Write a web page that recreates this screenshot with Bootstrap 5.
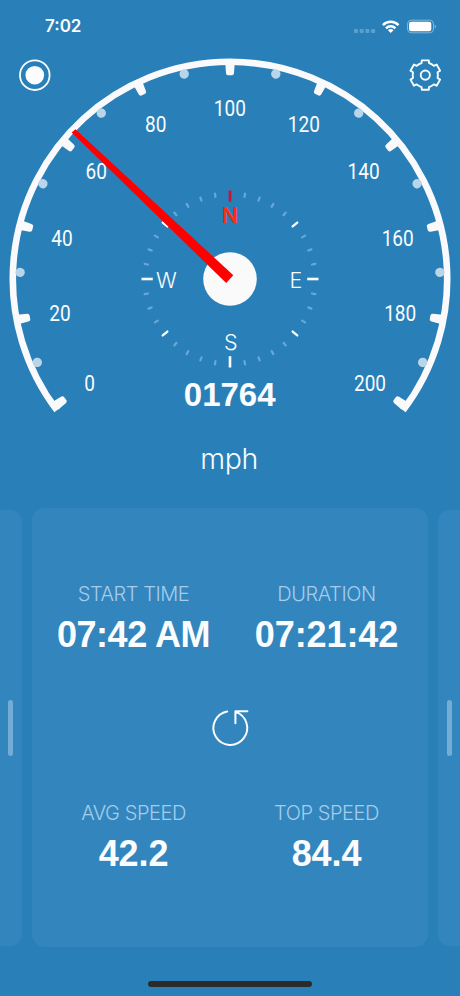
<!DOCTYPE html>
<html lang="en">
<head>
<meta charset="utf-8">
<meta name="viewport" content="width=device-width, initial-scale=1">
<title>Speedometer</title>
<link href="https://cdn.jsdelivr.net/npm/bootstrap@5.3.0/dist/css/bootstrap.min.css" rel="stylesheet">
<style>
  body { background: #2980b9; color: #fafcfe; font-family: Inter, "Liberation Sans", sans-serif; }
  .screen { width: 460px; height: 996px; }
  .status { height: 50px; padding: 1px 24px 0 45px; }
  .clock { font-size: 17px; font-weight: 600; line-height: 50px; }
  .tools { padding: 7px 17px; }
  .tool { width: 36px; height: 36px; }
  .gauge { height: 440px; }
  .scale-label { font: 400 22.5px Roboto, sans-serif; fill: #fafcfe; text-anchor: middle; }
  .compass { font: 350 21.5px Inter, sans-serif; fill: #fafcfe; text-anchor: middle; }
  .compass-north { font-weight: 600; fill: #f9300f; }
  .odometer { font: 700 33px "Liberation Sans", sans-serif; fill: #fafcfe; text-anchor: middle; }
  .unit { font: 350 28.5px Inter, sans-serif; letter-spacing: -.3px; fill: #fafcfe; text-anchor: middle; }
  .pages { height: 439px; margin-top: 18px; gap: 10px; }
  .panel { background: #3386bd; }
  .panel-main { width: 396px; border-radius: 13px; padding: 72px 5px 0; }
  .panel-side { width: 22px; margin: 2px 0 1px; }
  .panel-prev { border-radius: 0 12px 12px 0; padding-right: 9px; }
  .panel-next { border-radius: 12px 0 0 12px; padding-right: 8px; }
  .grip { width: 5px; height: 56px; background: #73add5; margin-bottom: 1px; }
  .stat-label { font-size: 20px; font-weight: 300; line-height: 28px; letter-spacing: -.45px; color: #a5cdeb; }
  .stat-value { font: 700 36px/54px "Liberation Sans", sans-serif; letter-spacing: -.1px; }
  .tight { letter-spacing: -.45px; }
  .reset { height: 42px; margin: 45px 0 50px; padding-right: 1px; }
  .home { width: 164px; height: 6px; background: #2b2b2b; margin-top: 34px; }
</style>
<script src="https://cdn.jsdelivr.net/npm/bootstrap@5.3.0/dist/js/bootstrap.bundle.min.js"></script>
</head>
<body>
<main class="screen d-flex flex-column overflow-hidden">
  <header class="status d-flex align-items-center justify-content-between">
    <span class="clock">7:02</span>
    <svg width="84" height="18" viewBox="352 16 84 18" aria-hidden="true">
      <g fill="#5b9fce"><rect x="354" y="28" width="4" height="4" rx="1"/><rect x="359.7" y="28" width="4" height="4" rx="1"/><rect x="365.4" y="28" width="4" height="4" rx="1"/><rect x="371.1" y="28" width="4" height="4" rx="1"/></g>
      <g fill="none" stroke="#fff" stroke-width="2.5"><path d="M382.9 24.1a11 11 0 0 1 15.6 0"/><path d="M386 27.3a6.7 6.7 0 0 1 9.4 0"/></g>
      <path d="M387.9 29.3a4 4 0 0 1 5.6 0l-2.8 2.8z" fill="#fff"/>
      <rect x="407.5" y="19.2" width="26" height="12.6" rx="3.8" fill="none" stroke="#7fb5dc"/>
      <rect x="409" y="20.8" width="22.3" height="9.4" rx="2.2" fill="#fff"/>
      <path d="M434.7 23.4q1.3.6 1.3 2t-1.3 2z" fill="#7fb5dc"/>
    </svg>
  </header>

  <section class="gauge position-relative">
    <svg class="d-block" width="460" height="440" viewBox="0 50 460 440" role="img" aria-label="Speed gauge">
      <g id="dial" transform="translate(230 279)"></g>
      <g id="labels" class="scale-label"></g>
      <g class="compass">
        <text x="230" y="223" class="compass-north">N</text>
        <text x="166.5" y="287.5">W</text>
        <text x="296" y="287.5">E</text>
        <text x="230.7" y="349.7">S</text>
      </g>
      <circle cx="230" cy="279" r="26.8" fill="#fafafa"/>
      <path d="M71.7 132.6L75.4 129.2L233.3 275.2L226.2 283z" fill="#f00"/>
      <text x="229.7" y="405.5" class="odometer">01764</text>
      <text x="229.1" y="469" class="unit">mph</text>
    </svg>
    <div class="tools position-absolute top-0 start-0 w-100 d-flex justify-content-between">
      <button class="tool btn p-0 border-0 d-flex" aria-label="Record">
        <svg width="36" height="36" viewBox="-18 -18 36 36"><circle cx="-.2" cy=".2" r="14.8" fill="none" stroke="#fafcfe" stroke-width="1.8"/><circle cx="-.2" cy=".2" r="9.3" fill="#fafcfe"/></svg>
      </button>
      <button class="tool btn p-0 border-0 d-flex" aria-label="Settings">
        <svg width="36" height="36" viewBox="-18 -18 36 36" fill="none" stroke="#fafcfe" stroke-width="1.9" stroke-linejoin="round"><path transform="translate(.3 .1)" d="M-3.5-14.7H3.5L3.7-12.1Q6.3-11.2 8.6-9.25L11.3-10.6L14.8-4.5L12.3-2.85Q12.9 0 12.3 2.85L14.8 4.5L11.3 10.6L8.6 9.25Q6.3 11.2 3.7 12.1L3.5 14.7H-3.5L-3.7 12.1Q-6.3 11.2-8.6 9.25L-11.3 10.6L-14.8 4.5L-12.3 2.85Q-12.9 0-12.3-2.85L-14.8-4.5L-11.3-10.6L-8.6-9.25Q-6.3-11.2-3.7-12.1z"/><circle cx=".3" cy=".1" r="4.6"/></svg>
      </button>
    </div>
  </section>

  <section class="pages d-flex flex-shrink-0">
    <div class="panel panel-side panel-prev d-flex align-items-center justify-content-end"><span class="grip rounded-pill"></span></div>
    <div class="panel panel-main text-center">
      <div class="row g-0">
        <div class="col-6"><div class="stat-label">START TIME</div><div class="stat-value tight">07:42 AM</div></div>
        <div class="col-6"><div class="stat-label">DURATION</div><div class="stat-value">07:21:42</div></div>
      </div>
      <div class="reset d-flex justify-content-center align-items-center">
        <svg width="42" height="42" viewBox="-21 -21 42 42" fill="none" stroke="#fafcfe" stroke-width="2" stroke-linecap="round" stroke-linejoin="round" aria-label="Reset"><path d="M-2.8-16.6A16.9 16.9 0 1 0 5.4-16.1M17.4-16.8H5.4V-4.8M5.4-16.8L7-15.2"/></svg>
      </div>
      <div class="row g-0">
        <div class="col-6"><div class="stat-label">AVG SPEED</div><div class="stat-value">42.2</div></div>
        <div class="col-6"><div class="stat-label">TOP SPEED</div><div class="stat-value">84.4</div></div>
      </div>
    </div>
    <div class="panel panel-side panel-next d-flex align-items-center justify-content-end"><span class="grip rounded-pill"></span></div>
  </section>
  <div class="home rounded-pill mx-auto flex-shrink-0"></div>
</main>
<script>
  const step = 25.2, end = step * 5;
  const at = (deg, r) => {
    const a = deg * Math.PI / 180;
    return (r * Math.sin(a)).toFixed(2) + ' ' + (-r * Math.cos(a)).toFixed(2);
  };
  let dial = `<path d="M${at(-end - 1.2, 217.2)}A217.2 217.2 0 1 1 ${at(end + 1.2, 217.2)}" fill="none" stroke="#fafafc" stroke-width="6.6"/>`;
  for (let i = -5; i <= 5; i++) {
    dial += `<path transform="rotate(${i * step})" d="M-4.7-215.5L-4-206Q-3.8-203.7-2-203.7H2Q3.8-203.7 4-206L4.7-215.5z" fill="#fafafc"/>`;
    if (i < 5) dial += `<circle transform="rotate(${(i + .5) * step})" cy="-210" r="4.7" fill="#b9d5ea"/>`;
  }
  // compass ring: one mark every ten degrees
  for (let d = 0; d < 360; d += 10) {
    const cardinal = d % 90 === 0, diagonal = [50, 130, 230, 310].includes(d);
    const colour = d === 0 ? '#d0102c' : cardinal || diagonal ? '#fafcfe' : '#67a8d8';
    const [r1, r2, w] = cardinal ? [77.2, 88.5, 2.6] : diagonal ? [81.8, 87.8, 2.3] : [83.3, 86.7, 2.2];
    dial += `<path d="M${at(d, r1)}L${at(d, r2)}" stroke="${colour}" stroke-width="${w}" stroke-linecap="${cardinal ? 'butt' : 'round'}"/>`;
  }
  document.getElementById('dial').innerHTML = dial;
  document.getElementById('labels').innerHTML = [
    [0, 89.5, 391], [20, 60, 321.3], [40, 62, 245.8], [60, 96.3, 178.5], [80, 155.8, 132.2], [100, 229.8, 116],
    [120, 303.8, 132.2], [140, 363.6, 178.5], [160, 397.7, 245.8], [180, 400.2, 321.3], [200, 370, 391]
  ].map(([v, x, y]) => `<text x="${x}" y="${y}" textLength="${String(v).length * 10.7}" lengthAdjust="spacingAndGlyphs">${v}</text>`).join('');
</script>
</body>
</html>
